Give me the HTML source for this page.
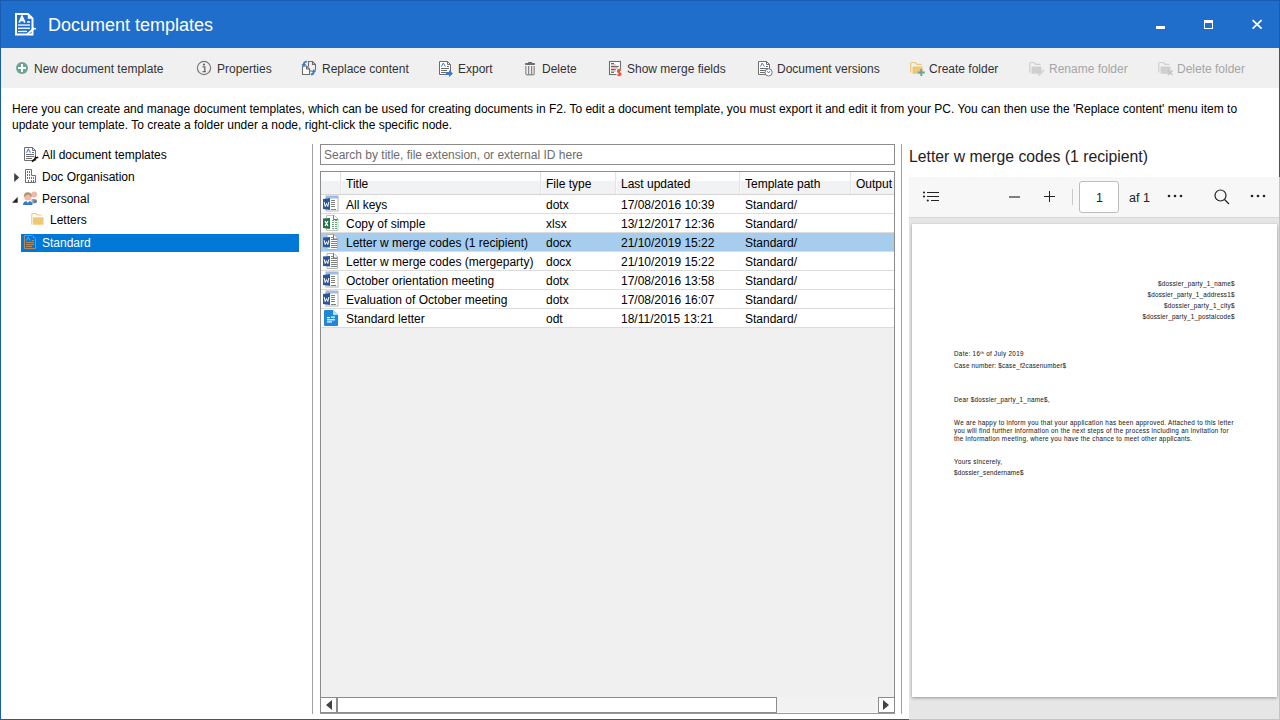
<!DOCTYPE html>
<html><head><meta charset="utf-8"><title>Document templates</title>
<style>
html,body{margin:0;padding:0;}
body{width:1280px;height:720px;position:relative;overflow:hidden;background:#fff;font-family:"Liberation Sans", sans-serif;}
.t{position:absolute;white-space:nowrap;line-height:16px;}
.r{position:absolute;display:block;}
.clip{position:absolute;overflow:hidden;}
</style></head><body>
<div class="r" style="left:0px;top:0px;width:1280px;height:48px;background:#1f6ecb;"></div>
<div class="r" style="left:0px;top:0px;width:1280px;height:1px;background:#1a5cb0;"></div>
<svg class="r" style="left:0px;top:0px" width="48" height="48" viewBox="0 0 48 48">
<path d="M16,14 H28 L32.5,18.5 V34.5 H16 Z" fill="none" stroke="#fff" stroke-width="2"/>
<path d="M28.5,15 V18 H31.5" fill="none" stroke="#fff" stroke-width="1.4"/>
<path d="M19.2,22.6 L22,16.4 L24.8,22.6 M20.3,20.4 H23.7" fill="none" stroke="#fff" stroke-width="1.8"/>
<rect x="27" y="21.2" width="3" height="1.5" fill="#fff"/>
<rect x="18" y="24.4" width="12" height="1.3" fill="#fff"/>
<rect x="18" y="27.6" width="12" height="1.3" fill="#fff"/>
<rect x="18" y="30.8" width="9" height="1.3" fill="#fff"/>
<path d="M26.8,34.6 L33.5,28.8" fill="none" stroke="#fff" stroke-width="1.8"/>
<path d="M32.5,27.5 Q34,29.5 36,28.5" fill="none" stroke="#fff" stroke-width="1.5"/>
</svg>
<div class="t" style="left:48px;top:15px;font-size:18px;color:#fff;line-height:20px">Document templates</div>
<div class="r" style="left:1156px;top:26px;width:9px;height:3px;background:#fff;"></div>
<div class="r" style="left:1204px;top:20px;width:9px;height:9px;background:transparent;border:1.5px solid #fff;border-top-width:3px;box-sizing:border-box"></div>
<svg class="r" style="left:1251px;top:19px" width="12" height="11" viewBox="0 0 12 11"><path d="M1.6,1.2 L10.6,9.6 M10.6,1.2 L1.6,9.6" stroke="#fff" stroke-width="1.7"/></svg>
<div class="r" style="left:1px;top:48px;width:1278px;height:40px;background:#f0f0f0;"></div>
<svg class="r" style="left:14px;top:58px" width="20" height="20" viewBox="0 0 20 20"><circle cx="8" cy="10" r="6" fill="#6aa692"/><rect x="7" y="6" width="2" height="8" fill="#fff"/><rect x="4" y="9" width="8" height="2" fill="#fff"/></svg>
<div class="t" style="left:34px;top:61px;font-size:12px;color:#333;">New document template</div>
<svg class="r" style="left:194px;top:58px" width="20" height="20" viewBox="0 0 20 20"><circle cx="10" cy="10" r="6.6" fill="none" stroke="#7a7a7a" stroke-width="1.2"/><circle cx="10" cy="6.6" r="1.1" fill="#6a6a6a"/><path d="M8.5,8.8 H10.8 V13.4 M8.5,13.6 H12" fill="none" stroke="#6a6a6a" stroke-width="1.3"/></svg>
<div class="t" style="left:217px;top:61px;font-size:12px;color:#333;">Properties</div>
<svg class="r" style="left:300px;top:58px" width="20" height="20" viewBox="0 0 20 20">
<path d="M2.5,8 H6.5 L9.5,11 V16.5 H2.5 Z" fill="#fff" stroke="#6e6e6e" stroke-width="1.1"/>
<path d="M6.5,8 V11 H9.5" fill="none" stroke="#6e6e6e" stroke-width="1.1"/>
<path d="M8.5,8.5 V3.5 H12.5 L15.5,6.5 V12.5" fill="none" stroke="#6e6e6e" stroke-width="1.1"/>
<path d="M12.5,3.5 V6.5 H15.5" fill="none" stroke="#6e6e6e" stroke-width="1.1"/>
<path d="M9.5,13 H12" fill="none" stroke="#6e6e6e" stroke-width="1"/>
<path d="M6.8,3.6 C4.8,3.6 3.8,4.8 3.8,6.8" fill="none" stroke="#3b7dc8" stroke-width="1.9"/>
<path d="M1.5,6 L3.8,9 L6.1,6 Z" fill="#3b7dc8"/>
<path d="M10.8,16.4 C12.8,16.4 13.8,15.2 13.8,13.4" fill="none" stroke="#3b7dc8" stroke-width="1.9"/>
<path d="M11.5,14 L13.8,11 L16.1,14 Z" fill="#3b7dc8"/>
</svg>
<div class="t" style="left:322px;top:61px;font-size:12px;color:#333;">Replace content</div>
<svg class="r" style="left:436px;top:58px" width="20" height="20" viewBox="0 0 20 20">
<path d="M3.5,3.5 H11.5 L14.5,6.5 V16.5 H3.5 Z" fill="#fff" stroke="#6e6e6e" stroke-width="1"/>
<path d="M11.5,3.5 V6.5 H14.5" fill="none" stroke="#6e6e6e" stroke-width="1"/>
<path d="M5.3,8.6 L7.3,5 L9.3,8.6" fill="none" stroke="#4a80c4" stroke-width="1"/>
<rect x="11" y="8" width="2" height="1" fill="#6e6e6e"/>
<rect x="5" y="10" width="8" height="1" fill="#6e6e6e"/>
<rect x="5" y="12" width="6" height="1" fill="#6e6e6e"/>
<rect x="5" y="14" width="6" height="1" fill="#6e6e6e"/>
<path d="M10,14 H13 V12 L17,15.5 L13,19 V17 H10 Z" fill="#3b7dc8"/></svg>
<div class="t" style="left:458px;top:61px;font-size:12px;color:#333;">Export</div>
<svg class="r" style="left:520px;top:58px" width="20" height="20" viewBox="0 0 20 20">
<rect x="5" y="5" width="10" height="2" rx="0.8" fill="#6e6e6e"/>
<rect x="8" y="4" width="4" height="1.5" fill="#6e6e6e"/>
<path d="M5.8,8 V15.5 Q5.8,16.8 7,16.8 H13 Q14.2,16.8 14.2,15.5 V8" fill="none" stroke="#9a9a9a" stroke-width="1.4"/>
<rect x="8.2" y="8" width="1" height="8.5" fill="#6e6e6e"/>
<rect x="11.2" y="8" width="1" height="8.5" fill="#6e6e6e"/>
</svg>
<div class="t" style="left:542px;top:61px;font-size:12px;color:#333;">Delete</div>
<svg class="r" style="left:605px;top:58px" width="20" height="20" viewBox="0 0 20 20">
<rect x="4.5" y="3.5" width="11" height="13" fill="#fff" stroke="#6e6e6e" stroke-width="1.1"/>
<rect x="6" y="5" width="3" height="1.1" fill="#6a6a6a"/>
<rect x="6" y="6.3" width="4.7" height="1.1" fill="#b4b4b4"/>
<rect x="6" y="7.9" width="7.8" height="1.1" fill="#6a6a6a"/>
<rect x="6" y="9.2" width="7" height="1.5" fill="#f2a48e"/>
<rect x="6" y="11" width="4.7" height="1.1" fill="#6a6a6a"/>
<rect x="6" y="12.3" width="4.7" height="1.3" fill="#b4b4b4"/>
<rect x="6" y="13.8" width="3" height="1.1" fill="#6a6a6a"/>
<circle cx="14.2" cy="14.4" r="3.3" fill="#fff"/>
<path d="M16,12.6 Q15.5,11.9 14.2,11.9 Q12.6,11.9 12.6,13.2 Q12.6,14.3 14.2,14.5 Q15.9,14.7 15.9,15.9 Q15.9,17.1 14.2,17.1 Q12.9,17.1 12.4,16.3 M14.2,10.8 V18.2" fill="none" stroke="#e05a3a" stroke-width="1.6"/>
</svg>
<div class="t" style="left:627px;top:61px;font-size:12px;color:#333;">Show merge fields</div>
<svg class="r" style="left:755px;top:58px" width="20" height="20" viewBox="0 0 20 20">
<path d="M3.5,3.5 H11.5 L14.5,6.5 V16.5 H3.5 Z" fill="#fff" stroke="#6e6e6e" stroke-width="1"/>
<path d="M11.5,3.5 V6.5 H14.5" fill="none" stroke="#6e6e6e" stroke-width="1"/>
<path d="M5.3,8.6 L7.3,5 L9.3,8.6" fill="none" stroke="#4a80c4" stroke-width="1"/>
<rect x="11" y="8" width="2" height="1" fill="#6e6e6e"/>
<rect x="5" y="10" width="8" height="1" fill="#6e6e6e"/>
<rect x="5" y="12" width="6" height="1" fill="#6e6e6e"/>
<rect x="5" y="14" width="6" height="1" fill="#6e6e6e"/>
<circle cx="13.6" cy="14.4" r="3.6" fill="#fff" stroke="#7a7a7a" stroke-width="1"/><path d="M12.2,13.2 L13.6,15 L15,13.2" fill="none" stroke="#4a80c4" stroke-width="1"/></svg>
<div class="t" style="left:777px;top:61px;font-size:12px;color:#333;">Document versions</div>
<svg class="r" style="left:907px;top:58px" width="20" height="20" viewBox="0 0 20 20"><path d="M3.8,14.5 V5.5 Q3.8,4.5 4.8,4.5 H8 L10,6.3 H14.5" fill="none" stroke="#f0c674" stroke-width="1.2"/><path d="M5.5,15.8 V9.5 Q5.5,8.5 6.5,8.5 H14.5 Q15.5,8.5 15.5,9.5 V15.8 Z" fill="#f0c674"/><rect x="13.3" y="11" width="2" height="7" fill="#6aa692"/><rect x="10.8" y="13.5" width="7" height="2" fill="#6aa692"/></svg>
<div class="t" style="left:929px;top:61px;font-size:12px;color:#333;">Create folder</div>
<svg class="r" style="left:1026px;top:58px" width="20" height="20" viewBox="0 0 20 20"><path d="M3.8,14.5 V5.5 Q3.8,4.5 4.8,4.5 H8 L10,6.3 H14.5" fill="none" stroke="#cfcfcf" stroke-width="1.2"/><path d="M5.5,15.8 V9.5 Q5.5,8.5 6.5,8.5 H14.5 Q15.5,8.5 15.5,9.5 V15.8 Z" fill="#cfcfcf"/><path d="M12.5,17.5 L18,12" stroke="#d6d6d6" stroke-width="2"/></svg>
<div class="t" style="left:1049px;top:61px;font-size:12px;color:#a6a6a6;">Rename folder</div>
<svg class="r" style="left:1155px;top:58px" width="20" height="20" viewBox="0 0 20 20"><path d="M3.8,14.5 V5.5 Q3.8,4.5 4.8,4.5 H8 L10,6.3 H14.5" fill="none" stroke="#cfcfcf" stroke-width="1.2"/><path d="M5.5,15.8 V9.5 Q5.5,8.5 6.5,8.5 H14.5 Q15.5,8.5 15.5,9.5 V15.8 Z" fill="#cfcfcf"/><path d="M13,12.5 L17.5,17 M17.5,12.5 L13,17" stroke="#c4c4c4" stroke-width="1.6"/></svg>
<div class="t" style="left:1177px;top:61px;font-size:12px;color:#a6a6a6;">Delete folder</div>
<div class="t" style="left:12px;top:101px;font-size:12px;color:#000;">Here you can create and manage document templates, which can be used for creating documents in F2. To edit a document template, you must export it and edit it from your PC. You can then use the &#39;Replace content&#39; menu item to</div>
<div class="t" style="left:12px;top:117px;font-size:12px;color:#000;">update your template. To create a folder under a node, right-click the specific node.</div>
<svg class="r" style="left:20px;top:144px" width="20" height="20" viewBox="0 0 20 20">
<path d="M4.5,3.5 H12.5 L15.5,6.5 V16.5 H4.5 Z" fill="#fff" stroke="#6e6e6e" stroke-width="1"/>
<path d="M12.5,3.5 V6.5 H15.5" fill="none" stroke="#6e6e6e" stroke-width="1"/>
<path d="M6.4,8.7 L8.4,5.1 L10.4,8.7" fill="none" stroke="#4a80c4" stroke-width="1.1"/>
<rect x="12" y="8" width="2" height="1" fill="#6e6e6e"/>
<rect x="6" y="10" width="8" height="1" fill="#6e6e6e"/>
<rect x="6" y="12" width="8" height="1" fill="#6e6e6e"/>
<rect x="6" y="14" width="6" height="1" fill="#6e6e6e"/>
<path d="M12,17.6 L16,14" stroke="#111" stroke-width="1.9"/>
<path d="M15,12.4 Q15.8,14.6 18.2,13.2" fill="none" stroke="#111" stroke-width="1.4"/>
</svg>
<div class="t" style="left:42px;top:147px;font-size:12px;color:#000;">All document templates</div>
<svg class="r" style="left:10px;top:166px" width="30" height="20" viewBox="0 0 30 20">
<path d="M4.2,7 L9.2,11.5 L4.2,16 Z" fill="#404040"/>
<path d="M15.5,16.5 V3.5 H21.5 V9.5 H25.5 V16.5 Z" fill="#fff" stroke="#6e6e6e" stroke-width="1"/>
<g fill="#3b7dc8"><rect x="17" y="5" width="1" height="2"/><rect x="19" y="5" width="1" height="2"/>
<rect x="17" y="8" width="1" height="2"/><rect x="19" y="8" width="1" height="2"/>
<rect x="17" y="11" width="1" height="2"/><rect x="19" y="11" width="1" height="2"/><rect x="21" y="11" width="1" height="2"/><rect x="23" y="11" width="1" height="2"/>
<rect x="21" y="14" width="1" height="2"/><rect x="23" y="14" width="1" height="2"/></g>
<rect x="18" y="14" width="1" height="2.5" fill="#6e6e6e"/>
</svg>
<div class="t" style="left:42px;top:169px;font-size:12px;color:#000;">Doc Organisation</div>
<svg class="r" style="left:10px;top:188px" width="30" height="20" viewBox="0 0 30 20">
<path d="M2,14.7 L7.7,9 V14.7 Z" fill="#222"/>
<circle cx="24.2" cy="6.5" r="3" fill="#f0b8a8"/>
<path d="M22,11.2 H25 Q27,11.2 27,13.2 Q27,15.2 25,15.2 H22 Z" fill="#7a7a7a"/>
<rect x="21.5" y="11.2" width="2" height="4" fill="#8ab0dc"/>
<circle cx="17.8" cy="9" r="3.6" fill="#f0b8a8"/>
<path d="M13.8,9.5 Q13.5,4.3 17.8,4.2 Q22,4.3 21.8,9.5 Q20,7 17.8,6.5 Q15.5,7.5 13.8,9.5 Z" fill="#b8916a"/>
<path d="M13,17 Q13,13 17.8,13 Q22.5,13 22.5,17 Z" fill="#3d78be"/><path d="M16.3,13 L17.8,15 L19.3,13 Z" fill="#fff"/>
</svg>
<div class="t" style="left:42px;top:191px;font-size:12px;color:#000;">Personal</div>
<svg class="r" style="left:28px;top:210px" width="20" height="20" viewBox="0 0 20 20"><path d="M3.8,14.5 V4.5 Q3.8,3.5 4.8,3.5 H8 L9.5,5 H13.5" fill="none" stroke="#f0c674" stroke-width="1.1"/><path d="M5,14.8 V8.3 Q5,7.3 6,7.3 H14.5 Q15.5,7.3 15.5,8.3 V14.8 Z" fill="#efc777"/></svg>
<div class="t" style="left:50px;top:212px;font-size:12px;color:#000;">Letters</div>
<div class="r" style="left:21px;top:234px;width:278px;height:18px;background:#0078d7;"></div>
<svg class="r" style="left:20px;top:232px" width="20" height="20" viewBox="0 0 20 20">
<path d="M4.5,3.5 H12.5 L15.5,6.5 V16.5 H4.5 Z" fill="none" stroke="#b08a63" stroke-width="1"/>
<circle cx="13.5" cy="5.5" r="0.8" fill="#b08a63"/>
<path d="M6.3,8.5 L8.3,5.3 L10.3,8.5" fill="none" stroke="#6aaee8" stroke-width="1"/>
<rect x="12" y="8" width="2" height="1" fill="#b08a63"/>
<rect x="6" y="10" width="8" height="1" fill="#b08a63"/>
<rect x="6" y="12" width="8" height="1" fill="#b08a63"/>
<rect x="6" y="14" width="6" height="1" fill="#b08a63"/>
</svg>
<div class="t" style="left:42px;top:235px;font-size:12px;color:#fff;">Standard</div>
<div class="r" style="left:312px;top:144px;width:1px;height:570px;background:#a0a0a0;"></div>
<div class="r" style="left:901px;top:144px;width:1px;height:570px;background:#a0a0a0;"></div>
<div class="r" style="left:320px;top:144px;width:575px;height:21px;background:#fff;border:1px solid #8c8c8c;box-sizing:border-box"></div>
<div class="t" style="left:324px;top:147px;font-size:12px;color:#6d6d6d;">Search by title, file extension, or external ID here</div>
<div class="r" style="left:320px;top:171px;width:575px;height:543px;background:#f0f0f0;border:1px solid #8c8c8c;box-sizing:border-box"></div>
<div class="r" style="left:321px;top:172px;width:573px;height:9px;background:#ffffff;"></div>
<div class="r" style="left:321px;top:181px;width:573px;height:13px;background:#f1f2f4;"></div>
<div class="r" style="left:321px;top:194px;width:573px;height:1px;background:#d5d5d5;"></div>
<div class="r" style="left:340px;top:172px;width:1px;height:22px;background:#e4e4e4;"></div>
<div class="r" style="left:341px;top:172px;width:1px;height:22px;background:#fafafa;"></div>
<div class="r" style="left:540px;top:172px;width:1px;height:22px;background:#e4e4e4;"></div>
<div class="r" style="left:541px;top:172px;width:1px;height:22px;background:#fafafa;"></div>
<div class="r" style="left:615px;top:172px;width:1px;height:22px;background:#e4e4e4;"></div>
<div class="r" style="left:616px;top:172px;width:1px;height:22px;background:#fafafa;"></div>
<div class="r" style="left:739px;top:172px;width:1px;height:22px;background:#e4e4e4;"></div>
<div class="r" style="left:740px;top:172px;width:1px;height:22px;background:#fafafa;"></div>
<div class="r" style="left:850px;top:172px;width:1px;height:22px;background:#e4e4e4;"></div>
<div class="r" style="left:851px;top:172px;width:1px;height:22px;background:#fafafa;"></div>
<div class="clip" style="left:321px;top:172px;width:573px;height:22px">
<div class="t" style="left:25px;top:4px;font-size:12px;color:#000;">Title</div>
<div class="t" style="left:225px;top:4px;font-size:12px;color:#000;">File type</div>
<div class="t" style="left:300px;top:4px;font-size:12px;color:#000;">Last updated</div>
<div class="t" style="left:424px;top:4px;font-size:12px;color:#000;">Template path</div>
<div class="t" style="left:535px;top:4px;font-size:12px;color:#000;">Output</div>
</div>
<div class="r" style="left:321px;top:195px;width:573px;height:18px;background:#fff;"></div>
<div class="r" style="left:321px;top:213px;width:573px;height:1px;background:#dcdcdc;"></div>
<svg class="r" style="left:320px;top:194px" width="20" height="20" viewBox="0 0 20 20">
<rect x="6" y="2" width="12" height="15" fill="#fff" stroke="#b4b4b4" stroke-width="1"/>
<rect x="6" y="2" width="12" height="2.5" fill="#9cbbe6"/>
<g fill="#808080"><rect x="11" y="6" width="4" height="1"/><rect x="11" y="8" width="4" height="1"/><rect x="11" y="10" width="4" height="1"/><rect x="11" y="12" width="4" height="1"/><rect x="11" y="15" width="5" height="1"/></g>
<path d="M3,5 L10,4 V16 L3,15 Z" fill="#2b579a"/>
<path d="M4.2,8 L5.2,12.5 L6.5,9.5 L7.8,12.5 L8.8,8" fill="none" stroke="#fff" stroke-width="1"/>
</svg>
<div class="t" style="left:346px;top:197px;font-size:12px;color:#000;">All keys</div>
<div class="t" style="left:546px;top:197px;font-size:12px;color:#000;">dotx</div>
<div class="t" style="left:621px;top:197px;font-size:12px;color:#000;">17/08/2016 10:39</div>
<div class="t" style="left:745px;top:197px;font-size:12px;color:#000;">Standard/</div>
<div class="r" style="left:321px;top:214px;width:573px;height:18px;background:#fff;"></div>
<div class="r" style="left:321px;top:232px;width:573px;height:1px;background:#dcdcdc;"></div>
<svg class="r" style="left:320px;top:213px" width="20" height="20" viewBox="0 0 20 20">
<path d="M6.5,2.5 H14.5 L18,6 V17.5 H6.5 Z" fill="#fff" stroke="#c4c4c4" stroke-width="1"/>
<path d="M13.5,2.5 V6.5 H18" fill="none" stroke="#555" stroke-width="0.8"/>
<g fill="#63a87a"><rect x="12" y="7" width="2" height="1"/><rect x="15" y="7" width="2" height="1"/><rect x="12" y="9" width="2" height="1"/><rect x="15" y="9" width="2" height="1"/><rect x="12" y="11" width="2" height="1"/><rect x="15" y="11" width="2" height="1"/><rect x="12" y="13" width="2" height="1"/><rect x="15" y="13" width="2" height="1"/><rect x="12" y="15" width="2" height="1"/><rect x="15" y="15" width="2" height="1"/></g>
<path d="M3,5.5 L10,5 V16 L3,15 Z" fill="#217346"/>
<path d="M5,8 L8,13 M8,8 L5,13" fill="none" stroke="#fff" stroke-width="1.3"/>
</svg>
<div class="t" style="left:346px;top:216px;font-size:12px;color:#000;">Copy of simple</div>
<div class="t" style="left:546px;top:216px;font-size:12px;color:#000;">xlsx</div>
<div class="t" style="left:621px;top:216px;font-size:12px;color:#000;">13/12/2017 12:36</div>
<div class="t" style="left:745px;top:216px;font-size:12px;color:#000;">Standard/</div>
<div class="r" style="left:321px;top:233px;width:573px;height:18px;background:#a6cdee;"></div>
<div class="r" style="left:321px;top:251px;width:573px;height:1px;background:#dcdcdc;"></div>
<svg class="r" style="left:320px;top:232px" width="20" height="20" viewBox="0 0 20 20">
<path d="M7,2.5 H14 L17.5,6 V17.5 H7 Z" fill="#fff" stroke="#b4b4b4" stroke-width="1"/>
<path d="M13.5,2.5 V7 H17.5" fill="none" stroke="#555" stroke-width="0.8"/>
<g fill="#808080"><rect x="11" y="5" width="2" height="1"/><rect x="11" y="7" width="6" height="1"/><rect x="11" y="9" width="6" height="1"/><rect x="11" y="11" width="6" height="1"/><rect x="11" y="13" width="6" height="1"/><rect x="11" y="15" width="6" height="1"/></g>
<path d="M3,5.5 L10,5 V15.5 L3,15 Z" fill="#2b579a"/>
<path d="M4.2,8.3 L5.2,12.5 L6.5,9.7 L7.8,12.5 L8.8,8.3" fill="none" stroke="#fff" stroke-width="1"/>
</svg>
<div class="t" style="left:346px;top:235px;font-size:12px;color:#000;">Letter w merge codes (1 recipient)</div>
<div class="t" style="left:546px;top:235px;font-size:12px;color:#000;">docx</div>
<div class="t" style="left:621px;top:235px;font-size:12px;color:#000;">21/10/2019 15:22</div>
<div class="t" style="left:745px;top:235px;font-size:12px;color:#000;">Standard/</div>
<div class="r" style="left:321px;top:252px;width:573px;height:18px;background:#fff;"></div>
<div class="r" style="left:321px;top:270px;width:573px;height:1px;background:#dcdcdc;"></div>
<svg class="r" style="left:320px;top:251px" width="20" height="20" viewBox="0 0 20 20">
<path d="M7,2.5 H14 L17.5,6 V17.5 H7 Z" fill="#fff" stroke="#b4b4b4" stroke-width="1"/>
<path d="M13.5,2.5 V7 H17.5" fill="none" stroke="#555" stroke-width="0.8"/>
<g fill="#808080"><rect x="11" y="5" width="2" height="1"/><rect x="11" y="7" width="6" height="1"/><rect x="11" y="9" width="6" height="1"/><rect x="11" y="11" width="6" height="1"/><rect x="11" y="13" width="6" height="1"/><rect x="11" y="15" width="6" height="1"/></g>
<path d="M3,5.5 L10,5 V15.5 L3,15 Z" fill="#2b579a"/>
<path d="M4.2,8.3 L5.2,12.5 L6.5,9.7 L7.8,12.5 L8.8,8.3" fill="none" stroke="#fff" stroke-width="1"/>
</svg>
<div class="t" style="left:346px;top:254px;font-size:12px;color:#000;">Letter w merge codes (mergeparty)</div>
<div class="t" style="left:546px;top:254px;font-size:12px;color:#000;">docx</div>
<div class="t" style="left:621px;top:254px;font-size:12px;color:#000;">21/10/2019 15:22</div>
<div class="t" style="left:745px;top:254px;font-size:12px;color:#000;">Standard/</div>
<div class="r" style="left:321px;top:271px;width:573px;height:18px;background:#fff;"></div>
<div class="r" style="left:321px;top:289px;width:573px;height:1px;background:#dcdcdc;"></div>
<svg class="r" style="left:320px;top:270px" width="20" height="20" viewBox="0 0 20 20">
<rect x="6" y="2" width="12" height="15" fill="#fff" stroke="#b4b4b4" stroke-width="1"/>
<rect x="6" y="2" width="12" height="2.5" fill="#9cbbe6"/>
<g fill="#808080"><rect x="11" y="6" width="4" height="1"/><rect x="11" y="8" width="4" height="1"/><rect x="11" y="10" width="4" height="1"/><rect x="11" y="12" width="4" height="1"/><rect x="11" y="15" width="5" height="1"/></g>
<path d="M3,5 L10,4 V16 L3,15 Z" fill="#2b579a"/>
<path d="M4.2,8 L5.2,12.5 L6.5,9.5 L7.8,12.5 L8.8,8" fill="none" stroke="#fff" stroke-width="1"/>
</svg>
<div class="t" style="left:346px;top:273px;font-size:12px;color:#000;">October orientation meeting</div>
<div class="t" style="left:546px;top:273px;font-size:12px;color:#000;">dotx</div>
<div class="t" style="left:621px;top:273px;font-size:12px;color:#000;">17/08/2016 13:58</div>
<div class="t" style="left:745px;top:273px;font-size:12px;color:#000;">Standard/</div>
<div class="r" style="left:321px;top:290px;width:573px;height:18px;background:#fff;"></div>
<div class="r" style="left:321px;top:308px;width:573px;height:1px;background:#dcdcdc;"></div>
<svg class="r" style="left:320px;top:289px" width="20" height="20" viewBox="0 0 20 20">
<rect x="6" y="2" width="12" height="15" fill="#fff" stroke="#b4b4b4" stroke-width="1"/>
<rect x="6" y="2" width="12" height="2.5" fill="#9cbbe6"/>
<g fill="#808080"><rect x="11" y="6" width="4" height="1"/><rect x="11" y="8" width="4" height="1"/><rect x="11" y="10" width="4" height="1"/><rect x="11" y="12" width="4" height="1"/><rect x="11" y="15" width="5" height="1"/></g>
<path d="M3,5 L10,4 V16 L3,15 Z" fill="#2b579a"/>
<path d="M4.2,8 L5.2,12.5 L6.5,9.5 L7.8,12.5 L8.8,8" fill="none" stroke="#fff" stroke-width="1"/>
</svg>
<div class="t" style="left:346px;top:292px;font-size:12px;color:#000;">Evaluation of October meeting</div>
<div class="t" style="left:546px;top:292px;font-size:12px;color:#000;">dotx</div>
<div class="t" style="left:621px;top:292px;font-size:12px;color:#000;">17/08/2016 16:07</div>
<div class="t" style="left:745px;top:292px;font-size:12px;color:#000;">Standard/</div>
<div class="r" style="left:321px;top:309px;width:573px;height:18px;background:#fff;"></div>
<div class="r" style="left:321px;top:327px;width:573px;height:1px;background:#dcdcdc;"></div>
<svg class="r" style="left:320px;top:308px" width="20" height="20" viewBox="0 0 20 20">
<path d="M5,2 H13 L18,7 V17 Q18,18 17,18 H5 Q4,18 4,17 V3 Q4,2 5,2 Z" fill="#1f86d8"/>
<path d="M13,2 L18,7 H13 Z" fill="#a8e6f8"/>
<rect x="7" y="9" width="3" height="1.2" fill="#fff"/><rect x="11" y="8.3" width="4" height="1.8" fill="#a8e6f8"/>
<rect x="7" y="11.2" width="8" height="1.2" fill="#fff"/><rect x="7" y="13.3" width="5" height="1.2" fill="#fff"/>
</svg>
<div class="t" style="left:346px;top:311px;font-size:12px;color:#000;">Standard letter</div>
<div class="t" style="left:546px;top:311px;font-size:12px;color:#000;">odt</div>
<div class="t" style="left:621px;top:311px;font-size:12px;color:#000;">18/11/2015 13:21</div>
<div class="t" style="left:745px;top:311px;font-size:12px;color:#000;">Standard/</div>
<div class="r" style="left:321px;top:697px;width:573px;height:15px;background:#f2f2f2;"></div>
<div class="r" style="left:321px;top:712px;width:573px;height:1px;background:#fafafa;"></div>
<div class="r" style="left:320px;top:697px;width:457px;height:16px;background:#fff;border:1px solid #8c8c8c;box-sizing:border-box"></div>
<div class="r" style="left:336px;top:697px;width:2px;height:16px;background:#8c8c8c;"></div>
<svg class="r" style="left:320px;top:697px" width="17" height="16" viewBox="0 0 17 16"><path d="M6,8 L12,3 V13 Z" fill="#444"/></svg>
<div class="r" style="left:878px;top:697px;width:17px;height:16px;background:#fff;border:1px solid #8c8c8c;box-sizing:border-box"></div>
<svg class="r" style="left:878px;top:697px" width="17" height="16" viewBox="0 0 17 16"><path d="M11,8 L5,3 V13 Z" fill="#444"/></svg>
<div class="r" style="left:320px;top:713px;width:575px;height:1px;background:#9a9a9a;"></div>
<div class="t" style="left:909px;top:147px;font-size:15.75px;color:#222;line-height:20px">Letter w merge codes (1 recipient)</div>
<div class="r" style="left:909px;top:177px;width:371px;height:543px;background:#e6e6e6;"></div>
<div class="r" style="left:909px;top:177px;width:371px;height:40px;background:#f7f7f7;"></div>
<div class="r" style="left:909px;top:217px;width:371px;height:1px;background:#d6d6d6;"></div>
<svg class="r" style="left:918px;top:186px" width="26" height="20" viewBox="0 0 26 20">
<g fill="#222"><circle cx="6" cy="6.5" r="1.1"/><circle cx="6" cy="10.5" r="1.1"/><circle cx="9.8" cy="14.5" r="1.1"/></g>
<g stroke="#222" stroke-width="1"><path d="M9,6.5 H21 M9,10.5 H21 M13,14.5 H21"/></g>
</svg>
<div class="r" style="left:1009px;top:196px;width:11px;height:2px;background:#808080;"></div>
<div class="r" style="left:1044px;top:196px;width:11px;height:1.3px;background:#222;"></div>
<div class="r" style="left:1049px;top:191px;width:1.3px;height:11px;background:#222;"></div>
<div class="r" style="left:1072px;top:189px;width:1px;height:16px;background:#c8c8c8;"></div>
<div class="r" style="left:1079px;top:181px;width:40px;height:32px;background:#fff;border:1px solid #bdbdbd;border-radius:3px;box-sizing:border-box"></div>
<div class="t" style="left:1096px;top:190px;font-size:12.5px;color:#222;">1</div>
<div class="t" style="left:1129px;top:190px;font-size:12.5px;color:#222;">af 1</div>
<svg class="r" style="left:1166px;top:192px" width="18" height="8" viewBox="0 0 18 8"><g fill="#222"><circle cx="3" cy="4" r="1.3"/><circle cx="9" cy="4" r="1.3"/><circle cx="15" cy="4" r="1.3"/></g></svg>
<svg class="r" style="left:1212px;top:188px" width="20" height="20" viewBox="0 0 20 20"><circle cx="8.5" cy="7.5" r="5.5" fill="none" stroke="#222" stroke-width="1.2"/><path d="M12.5,11.5 L17,16" stroke="#222" stroke-width="1.2"/></svg>
<svg class="r" style="left:1249px;top:192px" width="18" height="8" viewBox="0 0 18 8"><g fill="#222"><circle cx="3" cy="4" r="1.3"/><circle cx="9" cy="4" r="1.3"/><circle cx="15" cy="4" r="1.3"/></g></svg>
<div class="r" style="left:912px;top:224px;width:365px;height:473px;background:#fff;box-shadow:0 1px 3px rgba(0,0,0,0.35)"></div>
<div class="r" style="left:1279px;top:177px;width:1px;height:543px;background:#c4c4c4;"></div>
<div class="r" style="left:909px;top:719px;width:371px;height:1px;background:#c4c4c4;"></div>
<svg class="r" style="left:0;top:0" width="1280" height="720" viewBox="0 0 1280 720"><g font-family="Liberation Sans" fill="#1c1c1c" stroke="#1c1c1c" stroke-width="0.05"><text x="1158" y="285.5" textLength="76.5" lengthAdjust="spacing" text-anchor="start" font-size="6.3">$dossier_party_1_name$</text><text x="1147.5" y="296.5" textLength="87" lengthAdjust="spacing" text-anchor="start" font-size="6.3">$dossier_party_1_address1$</text><text x="1164" y="308" textLength="70.5" lengthAdjust="spacing" text-anchor="start" font-size="6.3">$dossier_party_1_city$</text><text x="1142.5" y="319" textLength="92" lengthAdjust="spacing" text-anchor="start" font-size="6.3">$dossier_party_1_postalcode$</text><text x="954" y="356" textLength="69.5" lengthAdjust="spacing" text-anchor="start" font-size="6.3">Date: 16<tspan font-size="4" dy="-2">th</tspan><tspan dy="2"> of July 2019</tspan></text><text x="954" y="368" textLength="112" lengthAdjust="spacing" text-anchor="start" font-size="6.3">Case number: $case_f2casenumber$</text><text x="954" y="402" textLength="95.5" lengthAdjust="spacing" text-anchor="start" font-size="6.3">Dear $dossier_party_1_name$,</text><text x="954" y="425" textLength="279.5" lengthAdjust="spacing" text-anchor="start" font-size="6.3">We are happy to inform you that your application has been approved. Attached to this letter</text><text x="954" y="433" textLength="274.5" lengthAdjust="spacing" text-anchor="start" font-size="6.3">you will find further information on the next steps of the process including an invitation for</text><text x="954" y="441" textLength="238" lengthAdjust="spacing" text-anchor="start" font-size="6.3">the information meeting, where you have the chance to meet other applicants.</text><text x="954" y="464" textLength="48" lengthAdjust="spacing" text-anchor="start" font-size="6.3">Yours sincerely,</text><text x="954" y="475" textLength="69.5" lengthAdjust="spacing" text-anchor="start" font-size="6.3">$dossier_sendername$</text></g></svg>
<div class="r" style="left:0px;top:0px;width:1px;height:720px;background:#1a5cb0;"></div>
<div class="r" style="left:1279px;top:0px;width:1px;height:177px;background:#1a5cb0;"></div>
<div class="r" style="left:0px;top:719px;width:909px;height:1px;background:#1a5cb0;"></div>
</body></html>
